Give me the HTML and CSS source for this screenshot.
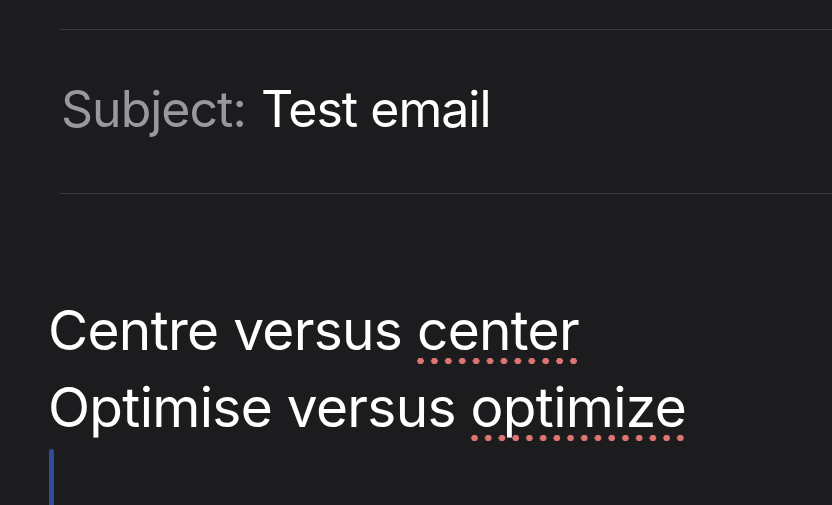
FILE: index.html
```html
<!DOCTYPE html>
<html lang="en">
<head>
    <meta charset="UTF-8">
    <meta name="viewport" content="width=device-width, initial-scale=1.0">
    <title>New Message</title>
    <link rel="stylesheet" href="styles.css">
</head>
<body>
    <div class="compose">
        <div class="field field-top"></div>
        <div class="field subject">
            <span class="label">Subject:</span>
            <span class="value">Test email</span>
        </div>
        <div class="message">
            <div class="line">Centre versus <span class="misspelled">center</span></div>
            <div class="line">Optimise versus <span class="misspelled">optimize</span></div>
            <div class="line"><span class="caret"></span></div>
        </div>
    </div>
</body>
</html>
```

FILE: styles.css
```css
body {
    margin: 0;
    background-color: #1c1c1e;
    font-family: Inter, "Noto Sans", sans-serif;
    color: #ffffff;
    overflow: hidden;
}
.compose {
    height: 505px;
}
.field {
    margin-left: 60px;
    border-bottom: 1px solid #3a3a3c;
}
.field-top {
    height: 29px;
}
.subject {
    height: 164px;
    box-sizing: border-box;
    padding-top: 49px;
    font-size: 50px;
    line-height: 60px;
    letter-spacing: -1px;
    white-space: nowrap;
}
.subject .label {
    color: #98989e;
    margin-left: 1px;
}
.subject .value {
    margin-left: 2px;
}
.message {
    padding: 98px 0 0 48px;
    font-size: 55px;
    line-height: 77px;
    letter-spacing: -0.7px;
    white-space: nowrap;
}
.misspelled {
    padding: 0 1px 2px 3px;
    margin: 0 -1px 0 -3px;
    background-image: radial-gradient(circle, #dd7572 3px, transparent 3.5px);
    background-size: 13px 8px;
    background-repeat: space no-repeat;
    background-position: left bottom;
}
.caret {
    display: inline-block;
    width: 5px;
    height: 62px;
    margin-left: 1px;
    background-color: #2f4b9c;
    border-radius: 3px 3px 0 0;
    vertical-align: top;
    margin-top: 3px;
}
```
